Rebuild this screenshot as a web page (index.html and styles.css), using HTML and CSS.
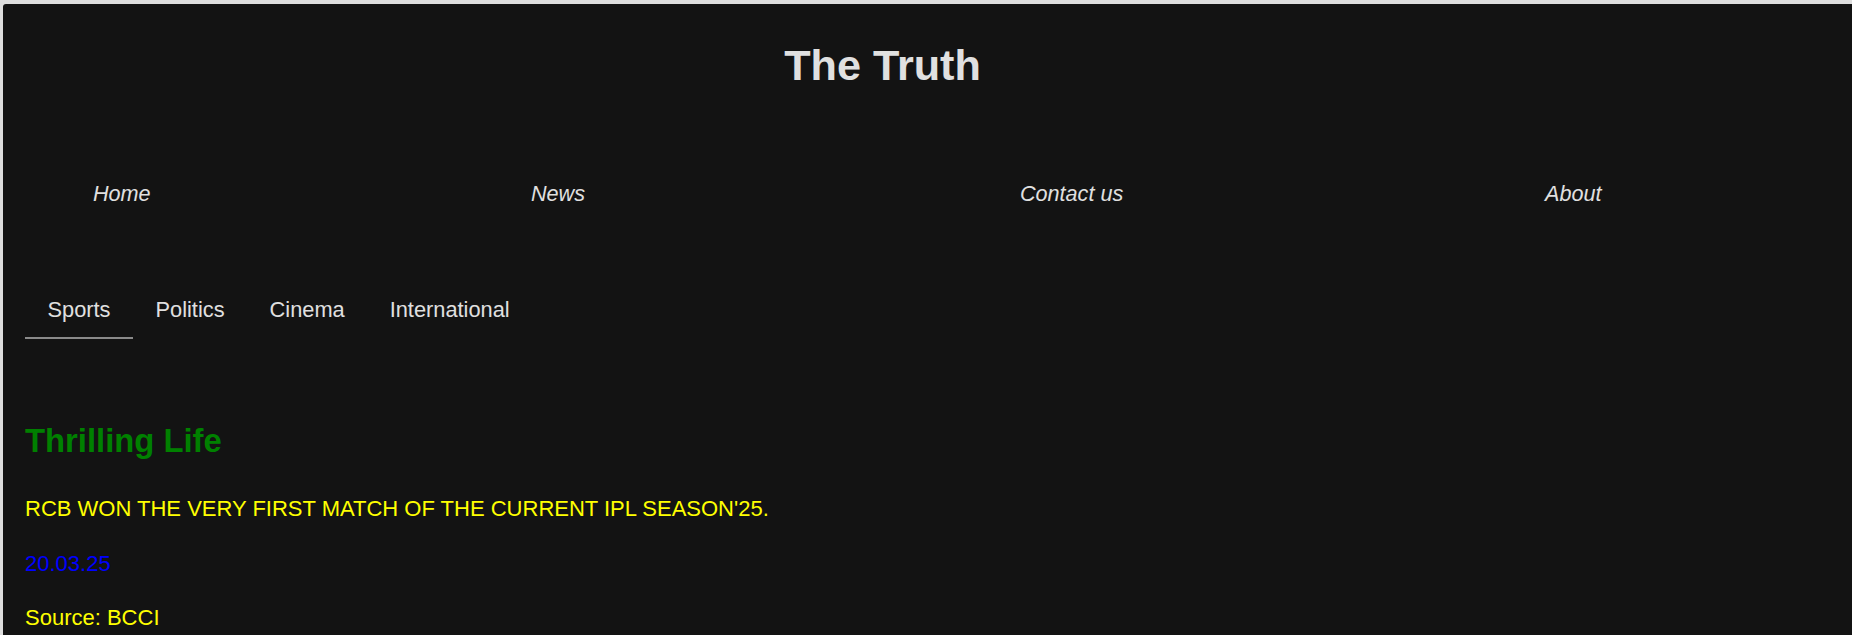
FILE: index.html
```html
<!DOCTYPE html>
<html lang="en">
<head>
<meta charset="utf-8">
<title>The Truth</title>
<link rel="stylesheet" href="styles.css">
</head>
<body>
<div class="page">
  <header class="masthead">
    <h1 class="title">The Truth</h1>
  </header>
  <nav class="mainnav">
    <a class="navlink" href="#">Home</a>
    <a class="navlink" href="#">News</a>
    <a class="navlink" href="#">Contact us</a>
    <a class="navlink" href="#">About</a>
  </nav>
  <div class="tabs">
    <span class="tab active">Sports</span>
    <span class="tab">Politics</span>
    <span class="tab">Cinema</span>
    <span class="tab">International</span>
  </div>
  <article class="story">
    <h2 class="story-title">Thrilling Life</h2>
    <p class="headline">RCB WON THE VERY FIRST MATCH OF THE CURRENT IPL SEASON'25.</p>
    <p class="date">20.03.25</p>
    <p class="source">Source: BCCI</p>
  </article>
</div>
</body>
</html>
```

FILE: styles.css
```css
html {
  background: #dedede;
}

body {
  margin: 0;
  padding: 4px 0 0 3px;
  overflow: hidden;
}

.page {
  background: #131313;
  color: #e0e0e0;
  font-family: "Liberation Sans", Arial, sans-serif;
  min-height: calc(100vh - 4px);
  border-top-left-radius: 3px;
  padding-top: 37px;
  box-sizing: border-box;
}

.masthead {
  padding-right: 90px;
}

.title {
  margin: 0;
  text-align: center;
  font-size: 43.2px;
  line-height: 1.15;
  font-weight: bold;
  color: #e0e0e0;
}

.mainnav {
  display: grid;
  grid-template-columns: 438px 489px 525px auto;
  margin-top: 91.5px;
  padding-left: 90px;
}

.navlink {
  font-size: 21.6px;
  line-height: 24.84px;
  font-style: italic;
  color: #e0e0e0;
  text-decoration: none;
}

.tabs {
  display: flex;
  margin-top: 77px;
  padding-left: 22px;
}

.tab {
  font-size: 21.8px;
  line-height: 24.84px;
  padding: 14px 22.5px 14.5px;
  border-bottom: 2px solid transparent;
  color: #e0e0e0;
}

.tab.active {
  border-bottom-color: #8a8a8a;
}

.story {
  margin-top: 83px;
  padding-left: 22px;
}

.story-title {
  margin: 0;
  font-size: 32.8px;
  line-height: 37.26px;
  font-weight: bold;
  color: #008000;
}

.headline,
.date,
.source {
  margin: 30px 0 0;
  font-size: 22px;
  line-height: 24.84px;
}

.headline {
  margin-top: 37.4px;
  color: #ffff00;
}

.date {
  color: #0000ff;
}

.source {
  margin-top: 29px;
  color: #ffff00;
}
```
